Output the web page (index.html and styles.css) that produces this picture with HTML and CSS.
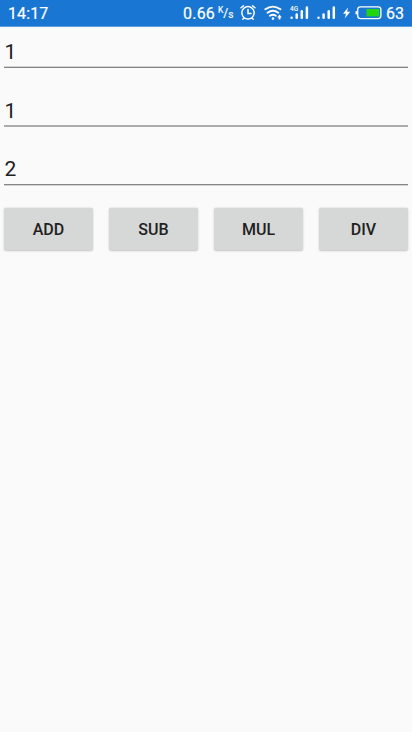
FILE: index.html
```html
<!DOCTYPE html>
<html lang="en">
<head>
<meta charset="utf-8">
<meta name="viewport" content="width=device-width">
<title>Calculator</title>
<link rel="stylesheet" href="styles.css">
</head>
<body>
<header class="status">
  <span class="time">14:17</span>
  <span class="speed">0.66</span>
  <span class="unit"><span class="unit-k">K</span><span class="unit-slash">/</span><span class="unit-s">s</span></span>
  <svg class="icons" width="142" height="26" viewBox="240 0 142 26" fill="none" stroke="#fff" stroke-linecap="round">
    <g stroke-width="1.5">
      <circle cx="248" cy="12.8" r="6.2"/>
      <path d="M248 9.4v4h3M241.1 7.8l2.4-2.1M254.9 7.8l-2.4-2.1M243.8 18.2l-1 1M252.2 18.2l1 1"/>
    </g>
    <g stroke-width="1.9">
      <path d="M265.3 9.3q7.6-5.4 15.2 0M267.5 12.7q5.4-3.8 10.8 0M269.9 15.8q3-2 6 0"/>
    </g>
    <circle cx="273" cy="18.6" r="1.3" fill="#fff" stroke="none"/>
    <path d="M279.5 14.6l2.3 2.8h-1.4v2.2h-1.8v-2.2h-1.4z" fill="#fff" stroke="none"/>
    <g stroke-width="2.5">
      <path d="M291.6 17.7v.1M296.7 14.6v3.2M301.8 11.2v6.6M306.9 7.5v10.3"/>
      <path d="M318.5 17.7v.1M323.6 14.6v3.2M328.7 11.2v6.6M333.8 7.5v10.3"/>
    </g>
    <text class="network" x="290" y="11">4G</text>
    <path d="M348 7.5l-5 6.3h3l-1.3 4.6 5.5-6.7h-3.1z" fill="#fff" stroke="none"/>
    <path d="M356.3 11.8v2" stroke-width="1.6"/>
    <rect x="357.7" y="6.8" width="23.2" height="11.8" rx="2.8" stroke-width="1.3"/>
    <rect x="366.5" y="9" width="12.7" height="7.4" fill="#22d510" stroke="none"/>
  </svg>
  <span class="percent">63</span>
</header>
<main>
  <div class="field first">1</div>
  <div class="field second">1</div>
  <div class="field third">2</div>
  <div class="buttons">
    <button>ADD</button>
    <button>SUB</button>
    <button>MUL</button>
    <button>DIV</button>
  </div>
</main>
</body>
</html>
```
FILE: styles.css
```css
* { box-sizing: border-box; }

body {
  margin: 0;
  min-height: 732px;
  background: #fafafa;
  color: #212121;
  font-family: Roboto, sans-serif;
}

.status {
  display: flex;
  align-items: flex-start;
  height: 27px;
  padding: 0 8px;
  background: #1976d2;
  border-bottom: 1px solid #5c9fde;
  color: #fff;
  font-size: 16px;
  line-height: 28px;
  -webkit-text-stroke: 0.2px #fff;
}

.time { letter-spacing: 0.1px; }

.speed {
  margin-left: auto;
  letter-spacing: 0.2px;
}

.unit {
  display: flex;
  width: 14px;
  margin-left: 3px;
}

.unit-k { font-size: 8.5px; line-height: 20px; }
.unit-slash { font-size: 12px; line-height: 26px; }
.unit-s { font-size: 10px; line-height: 30px; }

.icons { margin-left: 8px; flex: none; }

.network {
  fill: #fff;
  stroke: none;
  font-size: 6.5px;
  font-weight: 500;
}

.percent { margin-left: 4px; }

main { padding: 0 4px; }

.field {
  height: 41px;
  padding-left: 0.5px;
  border-bottom: 1px solid #858585;
  box-shadow: inset 0 -1px #d2d2d2;
  font-size: 21px;
  line-height: 50px;
}

.second {
  height: 59px;
  line-height: 86px;
  border-color: #acacac;
  box-shadow: inset 0 -1px #acacac;
}

.third {
  height: 58px;
  line-height: 84px;
  border-color: #858585;
  box-shadow: 0 1px #d2d2d2;
}

.buttons {
  display: grid;
  grid-template-columns: repeat(4, 89px);
  justify-content: space-between;
  margin-top: 23px;
}

button {
  height: 42px;
  padding: 1px 0 0;
  border: 0;
  border-radius: 2px;
  background: #d6d7d7;
  box-shadow: 0 0.5px 2px rgba(0, 0, 0, 0.22);
  color: #212121;
  font: 500 16px/41px Roboto, sans-serif;
}
```
